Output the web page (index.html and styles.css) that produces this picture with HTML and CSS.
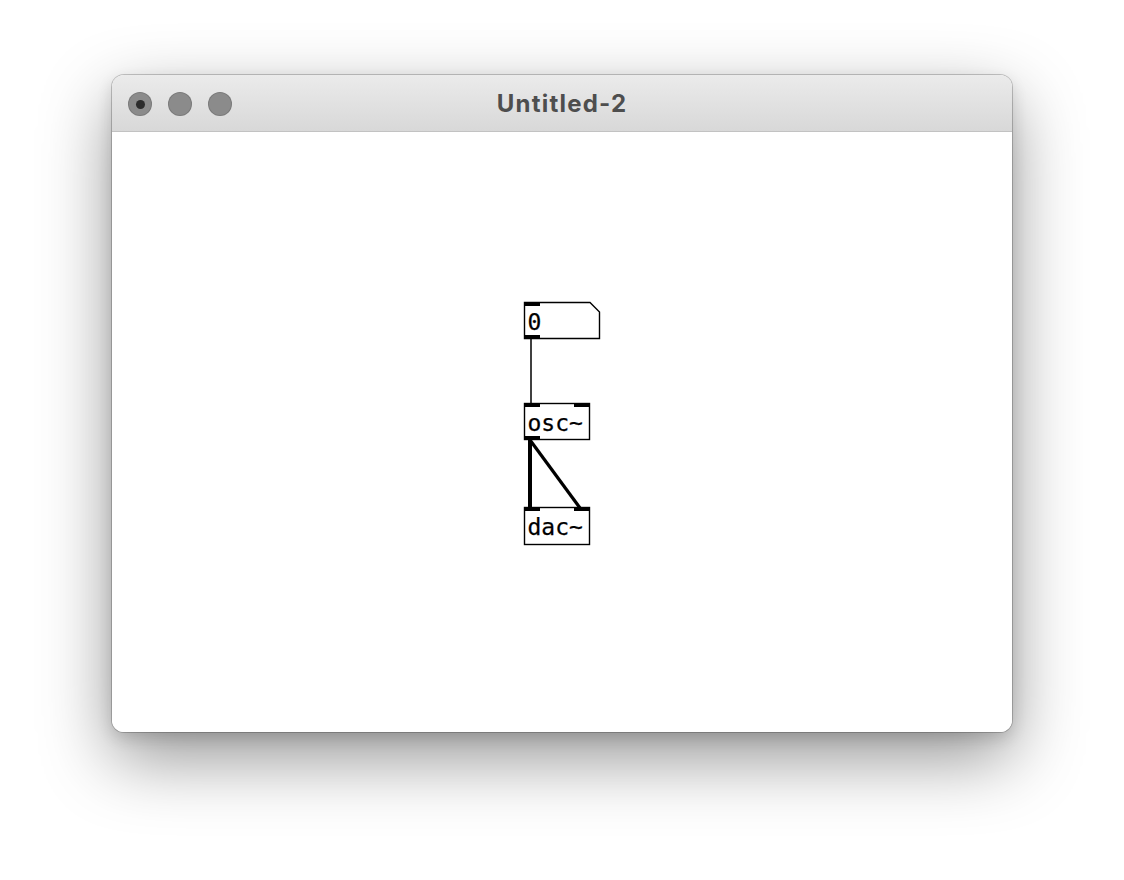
FILE: index.html
```html
<!DOCTYPE html>
<html>
<head>
<meta charset="utf-8">
<link rel="stylesheet" href="styles.css">
</head>
<body>
<div class="window">
  <div class="titlebar">
    <div class="lights">
      <span class="light"><span class="dot"></span></span>
      <span class="light"></span>
      <span class="light"></span>
    </div>
    <div class="title">Untitled-2</div>
  </div>
  <div class="canvas">
    <svg class="patch" width="900" height="600" viewBox="112 132 900 600">
      <!-- connections -->
      <line x1="531" y1="339" x2="531" y2="404" stroke="#000" stroke-width="1.5"/>
      <line x1="530" y1="440" x2="530" y2="508" stroke="#000" stroke-width="4"/>
      <line x1="530" y1="440" x2="580" y2="508" stroke="#000" stroke-width="3.2"/>
      <!-- number box -->
      <path d="M524.5 302.5 H590 L599.5 312 V338.5 H524.5 Z" fill="#fff" stroke="#000" stroke-width="1.4"/>
      <rect x="524" y="302" width="16" height="4" fill="#000"/>
      <rect x="524" y="335" width="16" height="4" fill="#000"/>
      <text x="527.5" y="329.5" class="mono">0</text>
      <!-- osc~ -->
      <rect x="524.5" y="403.5" width="65" height="36" fill="#fff" stroke="#000" stroke-width="1.4"/>
      <rect x="524" y="403" width="16" height="4" fill="#000"/>
      <rect x="574" y="403" width="16" height="4" fill="#000"/>
      <rect x="524" y="436" width="16" height="4" fill="#000"/>
      <text x="527.5" y="430.5" class="mono">osc~</text>
      <!-- dac~ -->
      <rect x="524.5" y="507.5" width="65" height="37" fill="#fff" stroke="#000" stroke-width="1.4"/>
      <rect x="524" y="507" width="16" height="4" fill="#000"/>
      <rect x="574" y="507" width="16" height="4" fill="#000"/>
      <text x="527.5" y="535" class="mono">dac~</text>
    </svg>
  </div>
</div>
</body>
</html>
```
FILE: styles.css
```css
html, body {
  margin: 0;
  padding: 0;
  background: #ffffff;
}
body {
  width: 1124px;
  height: 880px;
  overflow: hidden;
  padding-top: 75px;
  padding-left: 112px;
  box-sizing: border-box;
}
.window {
  width: 900px;
  height: 657px;
  border-radius: 12px;
  overflow: hidden;
  background: #fff;
  box-shadow: 0 0 0 1px rgba(0,0,0,0.2), 0 26px 70px rgba(0,0,0,0.42), 0 6px 16px rgba(0,0,0,0.14);
  display: flex;
  flex-direction: column;
}
.titlebar {
  height: 56px;
  flex: none;
  background: linear-gradient(#ebebeb, #d8d8d8);
  border-bottom: 1px solid #c2c2c2;
  display: flex;
  align-items: center;
  position: relative;
}
.lights {
  display: flex;
  gap: 16px;
  padding-left: 16px;
  padding-top: 2px;
}
.light {
  width: 24px;
  height: 24px;
  border-radius: 50%;
  background: #8b8b8b;
  box-shadow: inset 0 0 0 1px rgba(0,0,0,0.12);
  display: flex;
  align-items: center;
  justify-content: center;
}
.dot {
  width: 9px;
  height: 9px;
  border-radius: 50%;
  background: #2c2c2c;
}
.title {
  position: absolute;
  left: 0;
  right: 0;
  top: 0;
  bottom: 0;
  display: flex;
  align-items: center;
  justify-content: center;
  font-family: "Inter", "Liberation Sans", sans-serif;
  font-weight: 700;
  font-size: 24px;
  letter-spacing: 1.2px;
  color: #4e4e4e;
  padding-top: 1px;
}
.canvas {
  flex: 1;
  background: #fff;
  position: relative;
}
.patch {
  display: block;
}
.mono {
  font-family: "DejaVu Sans Mono", monospace;
  font-size: 23px;
  fill: #000;
  stroke: #000;
  stroke-width: 0.25px;
}
```
